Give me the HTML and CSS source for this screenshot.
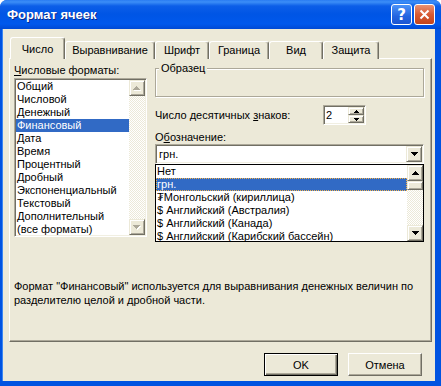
FILE: index.html
```html
<!DOCTYPE html>
<html lang="ru">
  <head>
    <meta charset="UTF-8" />
    <title>Формат ячеек</title>
    <link rel="stylesheet" href="styles.css">
  </head>

  <body>
    <div class="window">
      <div class="titlebar">
        <span class="title">Формат ячеек</span>
        <div class="caption_buttons">
          <div class="cap_btn help">?</div>
          <div class="cap_btn close">
            <svg width="11" height="11" viewBox="0 0 11 11">
              <path d="M1.5 1.5l8 8M9.5 1.5l-8 8" stroke="#fff" stroke-width="2" />
            </svg>
          </div>
        </div>
      </div>

      <div class="client">
        <div class="tabs">
          <div class="tab active tab_number">Число</div>
          <div class="tab tab_align">Выравнивание</div>
          <div class="tab tab_font">Шрифт</div>
          <div class="tab tab_border">Граница</div>
          <div class="tab tab_fill">Вид</div>
          <div class="tab tab_protect">Защита</div>
        </div>

        <div class="panel">
          <div class="columns">
            <div class="left_col">
              <div class="label"><u>Ч</u>исловые форматы:</div>
              <div class="listbox">
                <div class="items">
                  <div class="item">Общий</div>
                  <div class="item">Числовой</div>
                  <div class="item">Денежный</div>
                  <div class="item selected">Финансовый</div>
                  <div class="item">Дата</div>
                  <div class="item">Время</div>
                  <div class="item">Процентный</div>
                  <div class="item">Дробный</div>
                  <div class="item">Экспоненциальный</div>
                  <div class="item">Текстовый</div>
                  <div class="item">Дополнительный</div>
                  <div class="item">(все форматы)</div>
                </div>
                <div class="vscroll">
                  <div class="sbtn">
                    <svg width="8" height="5" viewBox="0 0 8 5">
                      <path d="M4 1h1v1h1v1h1v1h1v1H1V4h1V3h1V2h1z" fill="#fff" />
                      <path d="M3 0h1v1h1v1h1v1h1v1H0V3h1V2h1V1h1z" fill="#ACA899" />
                    </svg>
                  </div>
                  <div class="track"></div>
                  <div class="sbtn">
                    <svg width="8" height="5" viewBox="0 0 8 5">
                      <path d="M1 1h7v1H7v1H6v1H5v1H4V4H3V3H2V2H1z" fill="#fff" />
                      <path d="M0 0h7v1H6v1H5v1H4v1H3V3H2V2H1V1H0z" fill="#ACA899" />
                    </svg>
                  </div>
                </div>
              </div>
            </div>

            <div class="right_col">
              <fieldset class="sample">
                <legend>Образец</legend>
                <div class="sample_box"></div>
              </fieldset>

              <div class="decimals">
                <span class="decimals_label">Число десятичных <u>з</u>наков:</span>
                <div class="spinner">
                  <span class="spin_val">2</span>
                  <div class="spin_btns">
                    <div class="spin_btn">
                      <svg width="5" height="3" viewBox="0 0 5 3">
                        <path d="M2 0h1v1h1v1h1v1H0V2h1V1h1z" />
                      </svg>
                    </div>
                    <div class="spin_btn">
                      <svg width="5" height="3" viewBox="0 0 5 3">
                        <path d="M0 0h5v1H4v1H3v1H2V2H1V1H0z" />
                      </svg>
                    </div>
                  </div>
                </div>
              </div>

              <div class="label symbol_label">О<u>б</u>означение:</div>
              <div class="combo_wrap">
                <div class="combo">
                  <span class="combo_val">грн.</span>
                  <div class="sbtn drop_btn">
                    <svg width="7" height="4" viewBox="0 0 7 4">
                      <path d="M0 0h7v1H6v1H5v1H4v1H3V3H2V2H1V1H0z" />
                    </svg>
                  </div>
                </div>
                <div class="dropdown">
                  <div class="items">
                    <div class="item">Нет</div>
                    <div class="item selected focused">грн.</div>
                    <div class="item">₮Монгольский (кириллица)</div>
                    <div class="item">$ Английский (Австралия)</div>
                    <div class="item">$ Английский (Канада)</div>
                    <div class="item">$ Английский (Карибский бассейн)</div>
                  </div>
                  <div class="vscroll">
                    <div class="sbtn">
                      <svg width="7" height="4" viewBox="0 0 7 4">
                        <path d="M3 0h1v1h1v1h1v1h1v1H0V3h1V2h1V1h1z" />
                      </svg>
                    </div>
                    <div class="sbtn thumb"></div>
                    <div class="track"></div>
                    <div class="sbtn">
                      <svg width="7" height="4" viewBox="0 0 7 4">
                        <path d="M0 0h7v1H6v1H5v1H4v1H3V3H2V2H1V1H0z" />
                      </svg>
                    </div>
                  </div>
                </div>
              </div>
            </div>
          </div>

          <p class="description">
            Формат "Финансовый" используется для выравнивания денежных величин по<br>
            разделителю целой и дробной части.
          </p>
        </div>

        <div class="buttons">
          <div class="button default">OK</div>
          <div class="button">Отмена</div>
        </div>
      </div>
    </div>
  </body>
</html>
```

FILE: styles.css
```css
* {
  box-sizing: border-box;
}

body {
  margin: 0;
  background-color: #fff;
  font-family: "Liberation Sans", Arial, sans-serif;
  font-size: 11px;
  color: #000;
}

.window {
  width: 441px;
  height: 386px;
  display: flex;
  flex-direction: column;
  background-color: #0053E1;
  border-radius: 7px 7px 0 0;
  overflow: hidden;
}

/* title bar */
.titlebar {
  flex: none;
  height: 29px;
  display: flex;
  align-items: center;
  padding: 0 6px 0 7px;
  background: linear-gradient(to bottom, #2A7CF2 0, #3C8EF7 2px, #0C5EE8 6px, #0055E5 14px, #0058EC 24px, #0049D4 29px);
}

.title {
  flex: 1;
  color: #fff;
  font-weight: bold;
  font-size: 13px;
  text-shadow: 1px 1px #0A2A8C;
}

.caption_buttons {
  display: flex;
  gap: 2px;
}

.cap_btn {
  width: 21px;
  height: 21px;
  display: flex;
  align-items: center;
  justify-content: center;
  border: 1px solid #fff;
  border-radius: 3px;
}

.help {
  background: linear-gradient(to bottom, #4C93F7, #2263E0 60%, #1B55D2);
  color: #fff;
  font-family: "DejaVu Sans", sans-serif;
  font-weight: bold;
  font-size: 15px;
}

.close {
  background: linear-gradient(to bottom, #E99274, #D75A33 50%, #C3441B);
}

/* dialog body */
.client {
  flex: 1;
  display: flex;
  flex-direction: column;
  margin: 0 6px 5px 3px;
  padding: 8px 3px 0 6px;
  background-color: #ECE9D8;
  box-shadow: -1px 0 #3A86F2;
}

.tabs {
  display: flex;
  align-items: flex-end;
  height: 22px;
  margin-bottom: -1px;
  padding-left: 1px;
  position: relative;
  z-index: 1;
}

.tab {
  flex: none;
  height: 18px;
  line-height: 17px;
  text-align: center;
  white-space: nowrap;
  background-color: #ECE9D8;
  border: 1px solid #fff;
  border-right-color: #716F64;
  border-bottom: none;
  border-radius: 3px 3px 0 0;
  box-shadow: inset -1px 0 #ACA899;
}

.tab.active {
  height: 22px;
  line-height: 22px;
}

.tab_number { width: 55px; }
.tab_align { width: 90px; }
.tab_font { width: 54px; }
.tab_border { width: 60px; }
.tab_fill { width: 54px; }
.tab_protect { width: 56px; }

.panel {
  flex: none;
  height: 284px;
  padding: 5px 4px 0 4px;
  border: 1px solid #716F64;
  border-top-color: #fff;
  border-left-color: #fff;
  box-shadow: inset -1px -1px #ACA899;
}

.columns {
  display: grid;
  grid-template-columns: 133px 269px;
  column-gap: 8px;
}

.label {
  height: 13px;
  line-height: 13px;
  margin-bottom: 1px;
}

/* sunken boxes */
.listbox,
.combo,
.spinner {
  background-color: #fff;
  border: 1px solid #fff;
  border-top-color: #ACA899;
  border-left-color: #ACA899;
  box-shadow: inset 1px 1px #716F64, inset -1px -1px #F1EFE2;
  padding: 1px;
}

.listbox {
  height: 159px;
  display: flex;
}

.items {
  flex: 1;
  overflow: hidden;
}

.item {
  height: 13px;
  line-height: 13px;
  padding-left: 1px;
  white-space: nowrap;
}

.item.selected {
  background-color: #316AC5;
  color: #fff;
}

.item.focused {
  outline: 1px dotted #F3B24A;
  outline-offset: -1px;
}

/* scroll bars */
.vscroll {
  width: 16px;
  display: flex;
  flex-direction: column;
}

.sbtn {
  flex: none;
  width: 16px;
  height: 16px;
  display: flex;
  align-items: center;
  justify-content: center;
  background-color: #ECE9D8;
  border: 1px solid #716F64;
  border-top-color: #ECE9D8;
  border-left-color: #ECE9D8;
  box-shadow: inset 1px 1px #fff, inset -1px -1px #ACA899;
}

.track {
  flex: 1;
  background-color: #fff;
  background-image: repeating-conic-gradient(#ECE9D8 0 25%, #fff 0 50%);
  background-size: 2px 2px;
}

.thumb {
  height: 9px;
}

/* right column */
.sample {
  margin: -2px 0 0 0;
  padding: 0;
  border: 1px solid #ACA899;
  box-shadow: inset 1px 1px #fff, 1px 1px #fff;
}

.sample legend {
  margin-left: 3px;
  padding: 0 2px;
  line-height: 13px;
  background-color: #ECE9D8;
}

.sample_box {
  height: 21px;
}

.decimals {
  display: flex;
  align-items: center;
  margin-top: 8px;
}

.decimals_label {
  width: 168px;
}

.spinner {
  width: 43px;
  height: 20px;
  display: flex;
}

.spin_val {
  flex: 1;
  padding-left: 1px;
  line-height: 16px;
}

.spin_btns {
  width: 16px;
  display: flex;
  flex-direction: column;
}

.spin_btn {
  height: 8px;
  display: flex;
  align-items: center;
  justify-content: center;
  background-color: #ECE9D8;
  border: 1px solid #716F64;
  border-top-color: #ECE9D8;
  border-left-color: #ECE9D8;
  box-shadow: inset 1px 1px #fff, inset -1px -1px #ACA899;
}

.symbol_label {
  margin-top: 6px;
  margin-bottom: 0;
}

.combo_wrap {
  position: relative;
}

.combo {
  height: 20px;
  display: flex;
}

.combo_val {
  flex: 1;
  padding-left: 2px;
  line-height: 16px;
}

.dropdown {
  position: absolute;
  top: 100%;
  left: 0;
  width: 269px;
  height: 78px;
  display: flex;
  background-color: #fff;
  border: 1px solid #000;
  z-index: 2;
}

.description {
  margin: 42px 0 0 0;
  line-height: 14px;
  white-space: nowrap;
}

/* bottom buttons */
.buttons {
  display: flex;
  justify-content: flex-end;
  gap: 10px;
  margin-top: 11px;
  padding-right: 10px;
}

.button {
  width: 74px;
  height: 23px;
  display: flex;
  align-items: center;
  justify-content: center;
  border: 1px solid #716F64;
  border-top-color: #fff;
  border-left-color: #fff;
  box-shadow: inset -1px -1px #ACA899;
}

.button.default {
  border-color: #000;
  box-shadow: inset 1px 1px #fff, inset -1px -1px #716F64, inset -2px -2px #ACA899;
}
```
